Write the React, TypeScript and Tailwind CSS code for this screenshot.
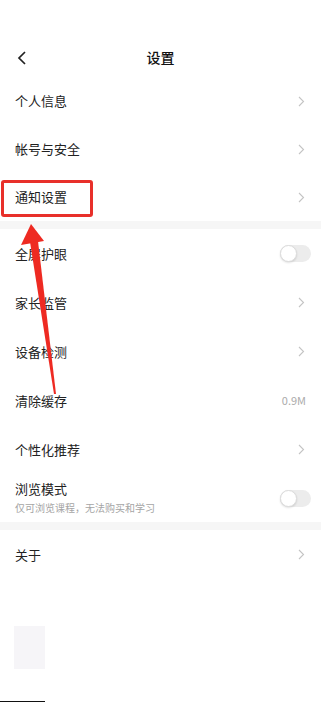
import React from 'react';

const Chevron: React.FC = () => (
  <svg width="7" height="11" viewBox="0 0 7 11" fill="none">
    <path d="M1 1l4.5 4.5L1 10" stroke="#c4c4c4" strokeWidth="1.1" />
  </svg>
);

const Toggle: React.FC = () => (
  <div className="w-[31px] h-[17px] rounded-full bg-[#ececec] relative">
    <div className="absolute left-0 top-0 w-[17px] h-[17px] rounded-full bg-white border border-[#dcdcdc] shadow-[0_1px_2px_rgba(0,0,0,0.12)]" />
  </div>
);

type Row = { label: string; right: 'chevron' | 'toggle' | 'text'; value?: string };

const Item: React.FC<{ row: Row; h: string }> = ({ row, h }) => (
  <div className={`flex items-center justify-between pl-[15px] ${row.right === 'toggle' ? 'pr-[10px]' : 'pr-[16px]'} ${h}`}>
    <span className="text-[13px] text-[#222]">{row.label}</span>
    {row.right === 'chevron' && <Chevron />}
    {row.right === 'toggle' && <Toggle />}
    {row.right === 'text' && <span className="text-[11px] text-[#ababab] -mr-[1px]">{row.value}</span>}
  </div>
);

const Divider: React.FC = () => <div className="h-[8px] bg-[#f6f6f6]" />;

export default function App() {
  const group1: Row[] = [
    { label: '个人信息', right: 'chevron' },
    { label: '帐号与安全', right: 'chevron' },
    { label: '通知设置', right: 'chevron' },
  ];
  const group2: Row[] = [
    { label: '全屏护眼', right: 'toggle' },
    { label: '家长监管', right: 'chevron' },
    { label: '设备检测', right: 'chevron' },
    { label: '清除缓存', right: 'text', value: '0.9M' },
    { label: '个性化推荐', right: 'chevron' },
  ];

  return (
    <div
      className="relative w-full h-[702px] bg-white overflow-hidden"
      style={{ fontFamily: '"Noto Sans CJK SC", "Noto Sans", sans-serif' }}
    >
      <div className="h-[37px]" />

      {/* Header */}
      <div className="relative h-[40px] flex items-center justify-center">
        <svg className="absolute left-[17px] top-[14px]" width="10" height="14" viewBox="0 0 10 14" fill="none">
          <path d="M8 1L2 7l6 6" stroke="#222" strokeWidth="1.7" />
        </svg>
        <span className="text-[14px] font-medium text-[#111]">设置</span>
      </div>

      {group1.map((r) => (
        <Item key={r.label} row={r} h="h-[48px]" />
      ))}
      <Divider />
      {group2.map((r) => (
        <Item key={r.label} row={r} h="h-[49px]" />
      ))}

      {/* Browse mode */}
      <div className="h-[48px] flex items-center justify-between pl-[15px] pr-[10px]">
        <div className="flex flex-col">
          <span className="text-[13px] text-[#222] leading-[18px]">浏览模式</span>
          <span className="text-[10px] text-[#a5a5a5] leading-[16px] mt-[2px]">仅可浏览课程，无法购买和学习</span>
        </div>
        <Toggle />
      </div>
      <Divider />
      <Item row={{ label: '关于', right: 'chevron' }} h="h-[49px]" />

      {/* faint leftover block */}
      <div className="absolute left-[14px] top-[626px] w-[31px] h-[43px] bg-[#f6f5f8]" />
      <div className="absolute left-0 bottom-0 w-[45px] h-[1px] bg-[#111]" />

      {/* Annotation: red box */}
      <div className="absolute left-[1px] top-[180px] w-[92px] h-[37px] border-[3px] border-[#e8302a] rounded-[3px]" />

      {/* Annotation: red arrow */}
      <svg className="absolute left-0 top-0 pointer-events-none" width="321" height="702" viewBox="0 0 321 702">
        <polygon points="31,224 21,245 44,241" fill="#ee2a22" />
        <polygon points="30,242 38,241 56,394 54,394" fill="#ee2a22" />
      </svg>
    </div>
  );
}
